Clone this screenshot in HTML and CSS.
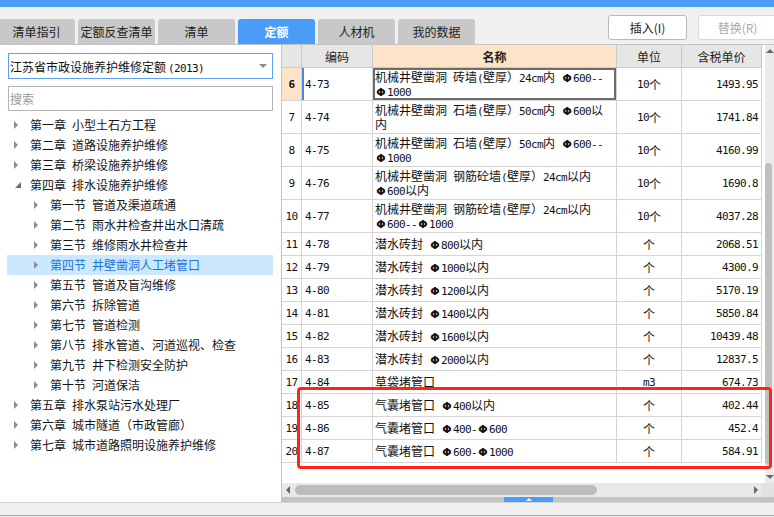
FILE: index.html
```html
<!DOCTYPE html>
<html lang="zh-CN">
<head>
<meta charset="utf-8">
<title>定额</title>
<link rel="stylesheet" href="styles.css">
</head>
<body>
<div class="topbar"></div>
<div class="toolbar">
  <div class="tabs">
    <div class="tab">清单指引</div>
    <div class="tab">定额反查清单</div>
    <div class="tab">清单</div>
    <div class="tab active">定额</div>
    <div class="tab">人材机</div>
    <div class="tab">我的数据</div>
  </div>
  <div class="actions">
    <button class="btn">插入(I)</button>
    <button class="btn disabled">替换(R)</button>
  </div>
</div>
<div class="main">
  <aside class="left">
    <div class="combo"><span>江苏省市政设施养护维修定额<span class="m">(2013)</span></span><span class="caret"></span></div>
    <div class="search">搜索</div>
    <ul class="tree">
      <li><span class="arrow"></span>第一章&ensp;小型土石方工程</li>
      <li><span class="arrow"></span>第二章&ensp;道路设施养护维修</li>
      <li><span class="arrow"></span>第三章&ensp;桥梁设施养护维修</li>
      <li><svg class="exp" width="6" height="6" viewBox="0 0 6 6"><path d="M6 0V6H0Z" fill="#6c6c6c"/></svg>第四章&ensp;排水设施养护维修</li>
      <li class="sub"><span class="arrow"></span>第一节&ensp;管道及渠道疏通</li>
      <li class="sub"><span class="arrow"></span>第二节&ensp;雨水井检查井出水口清疏</li>
      <li class="sub"><span class="arrow"></span>第三节&ensp;维修雨水井检查井</li>
      <li class="sub sel"><span class="arrow"></span>第四节&ensp;井壁凿洞人工堵管口</li>
      <li class="sub"><span class="arrow"></span>第五节&ensp;管道及盲沟维修</li>
      <li class="sub"><span class="arrow"></span>第六节&ensp;拆除管道</li>
      <li class="sub"><span class="arrow"></span>第七节&ensp;管道检测</li>
      <li class="sub"><span class="arrow"></span>第八节&ensp;排水管道、河道巡视、检查</li>
      <li class="sub"><span class="arrow"></span>第九节&ensp;井下检测安全防护</li>
      <li class="sub"><span class="arrow"></span>第十节&ensp;河道保洁</li>
      <li><span class="arrow"></span>第五章&ensp;排水泵站污水处理厂</li>
      <li><span class="arrow"></span>第六章&ensp;城市隧道（市政管廊）</li>
      <li><span class="arrow"></span>第七章&ensp;城市道路照明设施养护维修</li>
    </ul>
  </aside>
  <section class="right">
    <div class="grid-area">
      <div class="grid">
        <div class="cell h"></div>
        <div class="cell h">编码</div>
        <div class="cell h hname">名称</div>
        <div class="cell h">单位</div>
        <div class="cell h">含税单价</div>

        <div class="cell rh cur m">6</div>
        <div class="cell code curcode m">4-73</div>
        <div class="cell nm selcell"><div>机械井壁凿洞&ensp;砖墙<span class="m">(</span>壁厚）<span class="m">24cm</span>内&ensp;<span class="phi">Φ</span><span class="m">600--</span><br><span class="phi">Φ</span><span class="m">1000</span></div></div>
        <div class="cell un"><span class="m">10</span>个</div>
        <div class="cell pr m">1493.95</div>

        <div class="cell rh m">7</div>
        <div class="cell code m">4-74</div>
        <div class="cell nm"><div>机械井壁凿洞&ensp;石墙<span class="m">(</span>壁厚）<span class="m">50cm</span>内&ensp;<span class="phi">Φ</span><span class="m">600</span>以<br>内</div></div>
        <div class="cell un"><span class="m">10</span>个</div>
        <div class="cell pr m">1741.84</div>

        <div class="cell rh m">8</div>
        <div class="cell code m">4-75</div>
        <div class="cell nm"><div>机械井壁凿洞&ensp;石墙<span class="m">(</span>壁厚）<span class="m">50cm</span>内&ensp;<span class="phi">Φ</span><span class="m">600--</span><br><span class="phi">Φ</span><span class="m">1000</span></div></div>
        <div class="cell un"><span class="m">10</span>个</div>
        <div class="cell pr m">4160.99</div>

        <div class="cell rh m">9</div>
        <div class="cell code m">4-76</div>
        <div class="cell nm"><div>机械井壁凿洞&ensp;钢筋砼墙<span class="m">(</span>壁厚）<span class="m">24cm</span>以内<br><span class="phi">Φ</span><span class="m">600</span>以内</div></div>
        <div class="cell un"><span class="m">10</span>个</div>
        <div class="cell pr m">1690.8</div>

        <div class="cell rh m">10</div>
        <div class="cell code m">4-77</div>
        <div class="cell nm"><div>机械井壁凿洞&ensp;钢筋砼墙<span class="m">(</span>壁厚）<span class="m">24cm</span>以内<br><span class="phi">Φ</span><span class="m">600--</span><span class="phi">Φ</span><span class="m">1000</span></div></div>
        <div class="cell un"><span class="m">10</span>个</div>
        <div class="cell pr m">4037.28</div>

        <div class="cell rh m">11</div>
        <div class="cell code m">4-78</div>
        <div class="cell nm"><div>潜水砖封&ensp;<span class="phi">Φ</span><span class="m">800</span>以内</div></div>
        <div class="cell un">个</div>
        <div class="cell pr m">2068.51</div>

        <div class="cell rh m">12</div>
        <div class="cell code m">4-79</div>
        <div class="cell nm"><div>潜水砖封&ensp;<span class="phi">Φ</span><span class="m">1000</span>以内</div></div>
        <div class="cell un">个</div>
        <div class="cell pr m">4300.9</div>

        <div class="cell rh m">13</div>
        <div class="cell code m">4-80</div>
        <div class="cell nm"><div>潜水砖封&ensp;<span class="phi">Φ</span><span class="m">1200</span>以内</div></div>
        <div class="cell un">个</div>
        <div class="cell pr m">5170.19</div>

        <div class="cell rh m">14</div>
        <div class="cell code m">4-81</div>
        <div class="cell nm"><div>潜水砖封&ensp;<span class="phi">Φ</span><span class="m">1400</span>以内</div></div>
        <div class="cell un">个</div>
        <div class="cell pr m">5850.84</div>

        <div class="cell rh m">15</div>
        <div class="cell code m">4-82</div>
        <div class="cell nm"><div>潜水砖封&ensp;<span class="phi">Φ</span><span class="m">1600</span>以内</div></div>
        <div class="cell un">个</div>
        <div class="cell pr m">10439.48</div>

        <div class="cell rh m">16</div>
        <div class="cell code m">4-83</div>
        <div class="cell nm"><div>潜水砖封&ensp;<span class="phi">Φ</span><span class="m">2000</span>以内</div></div>
        <div class="cell un">个</div>
        <div class="cell pr m">12837.5</div>

        <div class="cell rh m">17</div>
        <div class="cell code m">4-84</div>
        <div class="cell nm"><div>草袋堵管口</div></div>
        <div class="cell un m">m3</div>
        <div class="cell pr m">674.73</div>

        <div class="cell rh m">18</div>
        <div class="cell code m">4-85</div>
        <div class="cell nm"><div>气囊堵管口&ensp;<span class="phi">Φ</span><span class="m">400</span>以内</div></div>
        <div class="cell un">个</div>
        <div class="cell pr m">402.44</div>

        <div class="cell rh m">19</div>
        <div class="cell code m">4-86</div>
        <div class="cell nm"><div>气囊堵管口&ensp;<span class="phi">Φ</span><span class="m">400-</span><span class="phi">Φ</span><span class="m">600</span></div></div>
        <div class="cell un">个</div>
        <div class="cell pr m">452.4</div>

        <div class="cell rh m">20</div>
        <div class="cell code m">4-87</div>
        <div class="cell nm"><div>气囊堵管口&ensp;<span class="phi">Φ</span><span class="m">600-</span><span class="phi">Φ</span><span class="m">1000</span></div></div>
        <div class="cell un">个</div>
        <div class="cell pr m">584.91</div>
      </div>
      <div class="vscroll">
        <div class="vbtn"><span class="tri-up"></span></div>
        <div class="vtrack"><div class="vthumb"></div></div>
        <div class="vbtn"><span class="tri-down"></span></div>
      </div>
    </div>
    <div class="hscroll">
      <div class="hbtn"><span class="tri-left"></span></div>
      <div class="hthumb"></div>
      <div class="hspace"></div>
      <div class="hbtn"><span class="tri-right"></span></div>
      <div class="corner"></div>
    </div>
    <div class="splitter"><div class="grip"><span class="grip-tri"></span></div></div>
    <div class="mark"></div>
  </section>
</div>
<div class="status"></div>
</body>
</html>
```

FILE: styles.css
```css
html, body {
  margin: 0;
  padding: 0;
}
body {
  width: 774px;
  height: 517px;
  overflow: hidden;
  background: #f0f0f0;
  font-family: "Noto Sans CJK SC", "Noto Sans", sans-serif;
  font-size: 12px;
  color: #151515;
}
.topbar {
  height: 7px;
  background: #4b9cf6;
}
.toolbar {
  height: 37px;
  display: flex;
  justify-content: space-between;
  align-items: flex-end;
  border-bottom: 1px solid #c4c4c4;
}
.tabs {
  display: flex;
  gap: 3px;
  margin-left: -2px;
}
.tab {
  width: 77px;
  height: 25px;
  line-height: 25px;
  text-align: center;
  background: #c8c8c8;
  border-radius: 3px 3px 0 0;
  color: #222;
}
.tab.active {
  background: #4b9cf6;
  color: #fff;
  font-weight: bold;
}
.actions {
  align-self: flex-start;
  margin-top: 8px;
  margin-right: -3px;
  display: flex;
  gap: 11px;
}
.btn {
  width: 79px;
  height: 25px;
  box-sizing: border-box;
  padding: 0;
  border: 1px solid #b9b9b9;
  border-radius: 3px;
  background: #fff;
  font: inherit;
  color: #222;
}
.btn.disabled {
  color: #a9a9a9;
  border-color: #d8d8d8;
}
.main {
  display: flex;
  height: 457px;
}
.left {
  width: 281px;
  flex: none;
  background: #fff;
  padding-top: 8px;
  box-sizing: border-box;
}
.combo {
  margin: 0 8px;
  height: 26px;
  box-sizing: border-box;
  border: 1px solid #5aa3f0;
  display: flex;
  align-items: center;
  justify-content: space-between;
  padding: 0 5px 0 1px;
  color: #111;
}
.combo .m {
  margin-left: 2px;
}
.caret {
  width: 0;
  height: 0;
  border-top: 4px solid #8a8a8a;
  border-left: 4px solid transparent;
  border-right: 4px solid transparent;
}
.search {
  margin: 7px 8px 0;
  height: 25px;
  box-sizing: border-box;
  border: 1px solid #b5b5b5;
  line-height: 23px;
  padding-left: 1px;
  color: #9a9a9a;
}
.tree {
  list-style: none;
  margin: 4px 8px 0 7px;
  padding: 0;
}
.tree li {
  height: 20px;
  line-height: 20px;
  display: flex;
  align-items: center;
  white-space: nowrap;
  color: #151515;
}
.arrow {
  width: 0;
  height: 0;
  border-left: 4px solid #8c8c8c;
  border-top: 4px solid transparent;
  border-bottom: 4px solid transparent;
  margin-left: 7px;
  margin-right: 12px;
}
.tree li.sub .arrow {
  margin-left: 27px;
}
.exp {
  margin-left: 8px;
  margin-right: 9px;
}
.tree li.sel {
  background: #cce8ff;
  color: #1b74d8;
}
.right {
  flex: 1;
  position: relative;
  display: flex;
  flex-direction: column;
  border-left: 1px solid #c4c4c4;
  background: #fff;
}
.grid-area {
  flex: 1;
  display: flex;
  min-height: 0;
}
.grid {
  width: 480px;
  flex: none;
  display: grid;
  grid-template-columns: 20px 71px 244px 65px 80px;
  grid-template-rows: 23px repeat(5, 33px) repeat(10, 23px);
  align-content: start;
}
.cell {
  box-sizing: border-box;
  border-right: 1px solid #d5d5d5;
  border-bottom: 1px solid #d5d5d5;
  display: flex;
  align-items: center;
  white-space: nowrap;
  color: #111;
}
.h {
  background: #e6e6e6;
  border-color: #c9c9c9;
  justify-content: center;
  color: #1e1e1e;
}
.h.hname {
  background: #fde4c8;
  font-weight: bold;
}
.m {
  font-family: "DejaVu Sans Mono", "Liberation Mono", monospace;
  font-size: 11px;
  letter-spacing: -0.62px;
}
.phi {
  display: inline-block;
  width: 12px;
  text-align: center;
  font-family: "DejaVu Sans", sans-serif;
  font-size: 11px;
  font-weight: bold;
}
.rh {
  justify-content: center;
}
.rh.cur {
  background: #fde4c8;
  font-weight: bold;
}
.code {
  padding-left: 3px;
}
.curcode {
  box-shadow: inset 2px 0 0 #3a8ef2;
}
.nm {
  padding-left: 2px;
}
.nm > div {
  line-height: 14px;
}
.nm .m,
.nm .phi {
  line-height: 10px;
}
.selcell {
  box-shadow: inset 0 0 0 2px #6c6c6c;
}
.un {
  justify-content: center;
}
.pr {
  justify-content: flex-end;
  padding-right: 3px;
}
.vscroll {
  width: 12px;
  display: flex;
  flex-direction: column;
  background: linear-gradient(to right, #fff 0 3px, #ebebeb 3px);
}
.vbtn {
  height: 12px;
  display: flex;
  align-items: center;
  justify-content: center;
  padding-left: 3px;
}
.tri-up {
  width: 0;
  height: 0;
  border-bottom: 4px solid #6a6a6a;
  border-left: 4px solid transparent;
  border-right: 4px solid transparent;
}
.tri-down {
  width: 0;
  height: 0;
  border-top: 4px solid #6a6a6a;
  border-left: 4px solid transparent;
  border-right: 4px solid transparent;
}
.vtrack {
  flex: 1;
  padding-top: 106px;
  padding-left: 3px;
}
.vthumb {
  width: 7px;
  height: 302px;
  background: #c0c0c0;
  border-radius: 4px;
}
.hscroll {
  height: 14px;
  display: flex;
  align-items: center;
  background: #e8e8e8;
}
.hbtn {
  width: 12px;
  height: 14px;
  display: flex;
  align-items: center;
  justify-content: center;
}
.tri-left {
  width: 0;
  height: 0;
  border-right: 4px solid #666;
  border-top: 4px solid transparent;
  border-bottom: 4px solid transparent;
}
.tri-right {
  width: 0;
  height: 0;
  border-left: 4px solid #666;
  border-top: 4px solid transparent;
  border-bottom: 4px solid transparent;
}
.hthumb {
  margin-left: 1px;
  width: 302px;
  height: 10px;
  border-radius: 5px;
  background: #bcbcbc;
}
.hspace {
  flex: 1;
}
.corner {
  width: 12px;
  height: 14px;
  background: #e2e2e2;
}
.splitter {
  height: 5px;
  background: #c4c4c4;
}
.grip {
  margin-left: 222px;
  width: 49px;
  height: 5px;
  background: #4b9cf6;
  display: flex;
  justify-content: center;
  align-items: center;
}
.grip-tri {
  width: 0;
  height: 0;
  border-bottom: 3px solid #fff;
  border-left: 3px solid transparent;
  border-right: 3px solid transparent;
}
.mark {
  position: absolute;
  left: 15px;
  top: 342px;
  width: 475px;
  height: 82px;
  box-sizing: border-box;
  border: 3px solid #ff2419;
  border-radius: 4px;
  pointer-events: none;
}
.status {
  height: 12px;
  border-top: 1px solid #d2d2d2;
  border-bottom: 1px solid #a6a6a6;
  background: #f0f0f0;
}
```
